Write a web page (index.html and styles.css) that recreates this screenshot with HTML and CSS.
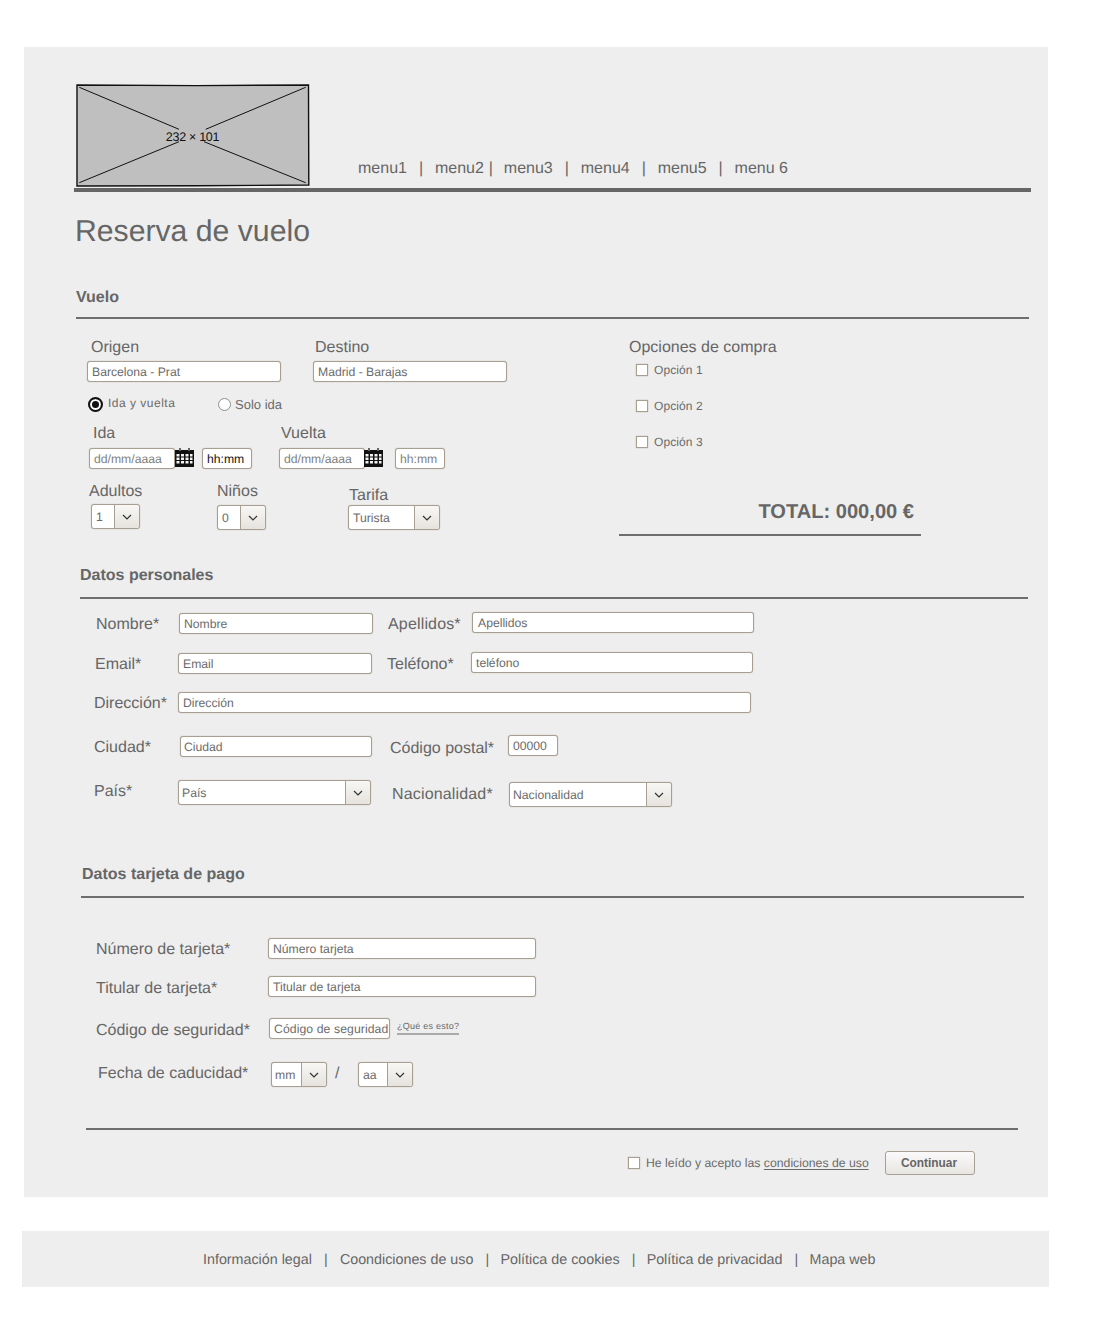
FILE: index.html
```html
<!DOCTYPE html>
<html lang="es">
<head>
<meta charset="utf-8">
<title>Reserva de vuelo</title>
<link rel="stylesheet" href="styles.css">
</head>
<body>
<svg class="defs" width="0" height="0" aria-hidden="true">
  <symbol id="chev" viewBox="0 0 10 6"><path d="M1 1l4 4 4-4" fill="none" stroke="#333" stroke-width="1.2"/></symbol>
  <symbol id="cal" viewBox="0 0 19 19">
    <rect x="0" y="2" width="19" height="17" fill="#111"/>
    <path d="M4 0h2v3H4zM13 0h2v3h-2z" fill="#666"/>
    <path d="M1.500 6h3v2.500h-3zM6 6h3v2.500H6zM10.500 6h3v2.500h-3zM15 6h2.500v2.500H15zM1.500 9.500h3V12h-3zM6 9.500h3V12H6zM10.500 9.500h3V12h-3zM15 9.500h2.500V12H15zM1.500 13h3v2.500h-3zM6 13h3v2.500H6zM10.500 13h3v2.500h-3zM15 13h2.500v2.500H15z" fill="#f4f4f4"/>
  </symbol>
</svg>
<main class="panel">
  <header class="top">
    <svg class="logo" width="234" height="103" viewBox="0 0 234 103">
      <path d="M1 1 L120 1.600 L232.500 1 L232.800 101 L120 101.800 L1 102 Z" fill="#bfbfbf" stroke="#111" stroke-width="1.400"/>
      <path d="M3.300 3.300 L103 45.300 M229.700 3.300 L129.700 45.300 M3.300 98.700 L103 57.700 M229.700 98.700 L128 57.700" fill="none" stroke="#111" stroke-width="1"/>
      <text class="logo-text" x="116.500" y="57" text-anchor="middle">232 × 101</text>
    </svg>
    <nav class="menu">
      <a class="m1">menu1</a><span class="sep s1">|</span><a class="m2">menu2</a><span class="sep s2">|</span><a class="m3">menu3</a><span class="sep s1">|</span><a class="m3">menu4</a><span class="sep s1">|</span><a class="m3">menu5</a><span class="sep s1">|</span><a class="m3">menu 6</a>
    </nav>
  </header>
  <div class="rule-top"></div>
  <h1 class="title">Reserva de vuelo</h1>

  <h2 class="head head-vuelo">Vuelo</h2>
  <div class="rule rule-vuelo"></div>
  <section class="vuelo">
    <div class="v-left">
      <div class="row v-labels"><span class="lab l-origen">Origen</span><span class="lab">Destino</span></div>
      <div class="row v-inputs"><div class="inp w194">Barcelona - Prat</div><div class="inp w194 destino">Madrid - Barajas</div></div>
      <div class="row v-radios">
        <span class="radio on"></span><span class="small r-lab1">Ida y vuelta</span>
        <span class="radio off"></span><span class="small r-lab2">Solo ida</span>
      </div>
      <div class="row v-labels2"><span class="lab l-ida">Ida</span><span class="lab np">Vuelta</span></div>
      <div class="row v-dates">
        <div class="inp w86 first-date ph">dd/mm/aaaa</div><svg class="cal"><use href="#cal"/></svg>
        <div class="inp w50 hh1 dark">hh:mm</div>
        <div class="inp w86 second-date ph">dd/mm/aaaa</div><svg class="cal cal2"><use href="#cal"/></svg>
        <div class="inp w50 hh2 ph">hh:mm</div>
      </div>
      <div class="row v-sel">
        <div class="col c-adultos"><span class="lab np">Adultos</span><div class="sel w49 s-adultos"><span class="val">1</span><span class="btn"><svg class="chev"><use href="#chev"/></svg></span></div></div>
        <div class="col c-ninos"><span class="lab">Niños</span><div class="sel w49 s-ninos"><span class="val">0</span><span class="btn"><svg class="chev"><use href="#chev"/></svg></span></div></div>
        <div class="col c-tarifa"><span class="lab">Tarifa</span><div class="sel w92 s-tarifa"><span class="val">Turista</span><span class="btn"><svg class="chev"><use href="#chev"/></svg></span></div></div>
      </div>
    </div>
    <div class="v-right">
      <span class="lab l-opc">Opciones de compra</span>
      <div class="opts">
        <label class="opt"><span class="check"></span><span class="small">Opción 1</span></label>
        <label class="opt"><span class="check"></span><span class="small">Opción 2</span></label>
        <label class="opt"><span class="check"></span><span class="small">Opción 3</span></label>
      </div>
      <div class="total">TOTAL: 000,00 €</div>
      <div class="rule rule-total"></div>
    </div>
  </section>

  <h2 class="head head-personal">Datos personales</h2>
  <div class="rule rule-personal"></div>
  <section class="form">
    <div class="row p1">
      <span class="lab nudge1 la84">Nombre*</span><div class="inp w194 nudge1">Nombre</div>
      <span class="lab np nudge1 la84 ml15 wide">Apellidos*</span><div class="inp w282 apell">Apellidos</div>
    </div>
    <div class="row p2">
      <span class="lab nudge1 la84 em">Email*</span><div class="inp w194 nudge1">Email</div>
      <span class="lab np nudge1 la84 ml15">Teléfono*</span><div class="inp w282">teléfono</div>
    </div>
    <div class="row p3"><span class="lab la85">Dirección*</span><div class="inp w573">Dirección</div></div>
    <div class="row p4">
      <span class="lab nudge1 la87">Ciudad*</span><div class="inp w192 nudge1 pad3">Ciudad</div>
      <span class="lab nudge2 la119 ml17">Código postal*</span><div class="inp w50">00000</div>
    </div>
    <div class="row p5">
      <span class="lab la85">País*</span><div class="sel w193 tight"><span class="val">País</span><span class="btn"><svg class="chev"><use href="#chev"/></svg></span></div>
      <span class="lab nudge3 la118 ml20 wide">Nacionalidad*</span><div class="sel w163 nudge2 tight"><span class="val">Nacionalidad</span><span class="btn"><svg class="chev"><use href="#chev"/></svg></span></div>
    </div>
  </section>

  <h2 class="head head-card">Datos tarjeta de pago</h2>
  <div class="rule rule-card"></div>
  <section class="form">
    <div class="row c1"><span class="lab la173">Número de tarjeta*</span><div class="inp w268">Número tarjeta</div></div>
    <div class="row c2"><span class="lab nudge1 la173 tit">Titular de tarjeta*</span><div class="inp w268">Titular de tarjeta</div></div>
    <div class="row c3">
      <span class="lab nudge1 la174">Código de seguridad*</span><div class="inp w121 spaced">Código de seguridad</div>
      <a class="what">¿Qué es esto?</a>
    </div>
    <div class="row c4">
      <span class="lab la174 fecha">Fecha de caducidad*</span>
      <div class="sel w56 tight"><span class="val">mm</span><span class="btn"><svg class="chev"><use href="#chev"/></svg></span></div>
      <span class="lab np slash">/</span>
      <div class="sel w55"><span class="val">aa</span><span class="btn"><svg class="chev"><use href="#chev"/></svg></span></div>
    </div>
  </section>
  <div class="rule rule-end"></div>
  <div class="row end">
    <span class="check end-check"></span>
    <span class="small end-lab">He leído y acepto las <a class="terms">condiciones de uso</a></span>
    <button class="cont" type="button">Continuar</button>
  </div>
</main>
<footer class="foot">
  <a>Información legal</a><span class="fsep">|</span><a>Coondiciones de uso</a><span class="fsep">|</span><a>Política de cookies</a><span class="fsep">|</span><a>Política de privacidad</a><span class="fsep">|</span><a>Mapa web</a>
</footer>
</body>
</html>
```

FILE: styles.css
```css
* { box-sizing: border-box; }
html, body { margin: 0; padding: 0; background: #fff; }
body { font-family: "Liberation Sans", Arial, sans-serif; color: #666; padding-top: 47px; width: 1101px; height: 1336px; overflow: hidden; text-rendering: geometricPrecision; }
.defs { position: absolute; }

.panel { margin-left: 24px; width: 1024px; background: #eee; padding: 37px 0 22px; }
.top { display: flex; align-items: flex-end; margin-left: 52px; }
.logo { display: block; flex: none; }
.logo-text { font-family: "Liberation Sans", sans-serif; font-size: 12.5px; letter-spacing: -.3px; fill: #111; }
.menu { display: flex; height: 20px; margin: 0 0 9px 48px; font-size: 16px; line-height: 22px; }
.sep { width: 5px; }
.s1 { margin: 0 11px 0 12px; }
.s2 { margin: 0 10px 0 5px; }
.rule-top { margin: 1px 0 0 50px; width: 957px; height: 4px; background: #666; }
.title { margin: 22px 0 0 51px; height: 34px; font-size: 30.2px; line-height: 36px; font-weight: 400; color: #666; }

.head { margin: 0; height: 20px; font-size: 16px; line-height: 24px; font-weight: 700; color: #666; }
.rule { height: 2px; background: #6e6e6e; }
.head-vuelo { margin: 38px 0 0 52px; }
.rule-vuelo { margin: 11px 0 0 52px; width: 953px; }
.head-personal { margin: 28px 0 0 56px; }
.rule-personal { margin: 13px 0 0 56px; width: 948px; }
.head-card { margin: 56px 0 0 58px; }
.rule-card { margin: 13px 0 0 57px; width: 943px; }
.rule-end { margin: 41px 0 0 62px; width: 932px; }
.rule-total { margin-top: 11px; width: 302px; }

.row { display: flex; align-items: flex-start; }
.lab { display: block; flex: none; height: 20px; padding-left: 1px; font-size: 16px; line-height: 24px; color: #666; }
.lab.np { padding-left: 0; }
.lab.wide { letter-spacing: .16px; }
.small { font-size: 12px; line-height: 14px; color: #6b6b6b; }

.inp, .sel { flex: none; background: #fff; border: 1px solid #a89f93; border-radius: 3px; box-shadow: 0 0 1px #a89f93; font-size: 12.2px; color: #6b6b6b; }
.inp { height: 21px; line-height: 21px; padding-left: 4px; white-space: nowrap; overflow: hidden; }
.apell { padding-left: 5px; }
.pad3 { padding-left: 3px; }
.spaced { letter-spacing: .1px; }
.ph { color: #808080; }
.dark { color: #111; }
.w50 { width: 50px; } .w86 { width: 86px; } .w121 { width: 121px; } .w192 { width: 192px; } .w194 { width: 194px; }
.w268 { width: 268px; } .w282 { width: 282px; } .w573 { width: 573px; }
.sel { display: flex; height: 25px; line-height: 24px; }
.val { flex: 1; padding-left: 4px; white-space: nowrap; overflow: hidden; }
.tight .val { padding-left: 3px; }
.btn { flex: none; width: 25px; display: flex; align-items: center; justify-content: center; border-left: 1px solid #a89f93; border-radius: 0 3px 3px 0; background: linear-gradient(#f8f7f5, #e6e3dd); }
.chev { width: 10px; height: 6px; display: block; }
.w49 { width: 49px; } .w55 { width: 55px; } .w56 { width: 56px; } .w92 { width: 92px; } .w163 { width: 163px; } .w193 { width: 193px; }

.nudge1 { margin-top: 1px; }
.nudge2 { margin-top: 2px; }
.nudge3 { margin-top: 3px; }
.ml15 { margin-left: 15px; }
.ml17 { margin-left: 17px; }
.ml20 { margin-left: 20px; }

.vuelo { display: flex; align-items: flex-start; }
.v-left { margin-left: 63px; width: 532px; }
.v-labels { margin-top: 17px; }
.l-origen { margin-left: 3px; width: 224px; }
.v-inputs { margin-top: 5px; }
.destino { margin-left: 32px; }
.v-radios { margin-top: 13px; height: 18px; }
.radio { flex: none; display: block; border-radius: 50%; background: #fff; }
.radio.on { width: 15px; height: 15px; margin: 2px 0 0 1px; border: 2px solid #111; box-shadow: inset 0 0 0 2px #fff, inset 0 0 0 6px #111; }
.radio.off { width: 13px; height: 13px; margin-top: 3px; border: 1px solid #8f8f8f; }
.r-lab1 { width: 110px; margin-left: 5px; letter-spacing: .5px; line-height: 17px; }
.r-lab2 { margin: 2px 0 0 4px; font-size: 13px; line-height: 16px; }
.v-labels2 { margin-top: 9px; }
.l-ida { margin-left: 5px; width: 189px; }
.v-dates { margin-top: 6px; }
.first-date { margin-left: 2px; }
.cal { flex: none; width: 19px; height: 19px; margin-top: 0; display: block; }
.cal2 { margin-left: -1px; }
.hh1 { margin-left: 8px; }
.second-date { margin-left: 27px; }
.hh2 { margin-left: 12px; }
.v-sel { margin-top: 11px; }
.col { flex: none; }
.c-adultos { margin-left: 2px; width: 127px; }
.c-ninos { width: 132px; }
.s-adultos { margin: 4px 0 0 2px; }
.s-ninos { margin: 5px 0 0 1px; }
.c-tarifa { padding-top: 4px; }
.s-tarifa { margin-top: 1px; }

.v-right { width: 320px; }
.l-opc { margin: 17px 0 0 9px; }
.opts { display: flex; flex-direction: column; gap: 22px; margin-top: 7px; }
.opt { display: flex; align-items: flex-start; height: 14px; }
.check { flex: none; display: block; width: 12px; height: 12px; background: #fff; border: 1px solid #a89f93; box-shadow: 0 0 1px #a89f93; }
.opt .check { margin: 1px 0 0 17px; }
.opt .small { margin-left: 6px; letter-spacing: .1px; }
.total { margin-top: 50px; width: 295px; height: 24px; font-size: 20.1px; line-height: 26px; font-weight: 700; text-align: right; color: #666; }

.form { margin-left: 71px; }
.p1 { margin-top: 13px; }
.p2 { margin-top: 18px; }
.p3 { margin-top: 18px; margin-left: -2px; }
.p4 { margin-top: 22px; margin-left: -2px; }
.p5 { margin-top: 23px; margin-left: -2px; }
.p2 > .em { margin-left: -1px; width: 84px; }
.la84 { width: 84px; } .la85 { width: 85px; } .la87 { width: 87px; } .la118 { width: 118px; } .la119 { width: 119px; }
.la173 { width: 173px; } .la174 { width: 174px; }
.c1 { margin-top: 40px; }
.c2 { margin-top: 17px; }
.c3 { margin-top: 21px; }
.c4 { margin-top: 23px; margin-left: 2px; }
.what { margin: 2px 0 0 7px; font-size: 9px; line-height: 12px; height: 15px; border-bottom: 2px solid #aaa; color: #666; letter-spacing: .25px; }
.slash { width: 23px; margin-left: 8px; }

.end { margin: 21px 0 0 604px; }
.end-check { margin-top: 6px; }
.end-lab { margin: 5px 0 0 6px; width: 239px; font-size: 12.25px; }
.terms { text-decoration: underline; text-underline-offset: 2px; }
.cont { flex: none; width: 90px; height: 24px; padding: 0 2px 0 0; border: 1px solid #a89f93; border-radius: 3px; background: linear-gradient(#fbfafa, #e8e6e2); font: 700 11.9px "Liberation Sans", Arial, sans-serif; color: #666; }

.foot { margin: 34px 0 0 22px; width: 1027px; height: 56px; background: #eee; display: flex; align-items: center; padding: 2px 0 0 181px; font-size: 14.3px; color: #666; white-space: nowrap; }
.fsep { width: 5px; margin: 0 10px 0 12px; }
.fsep:first-of-type { margin-right: 11px; }
```
